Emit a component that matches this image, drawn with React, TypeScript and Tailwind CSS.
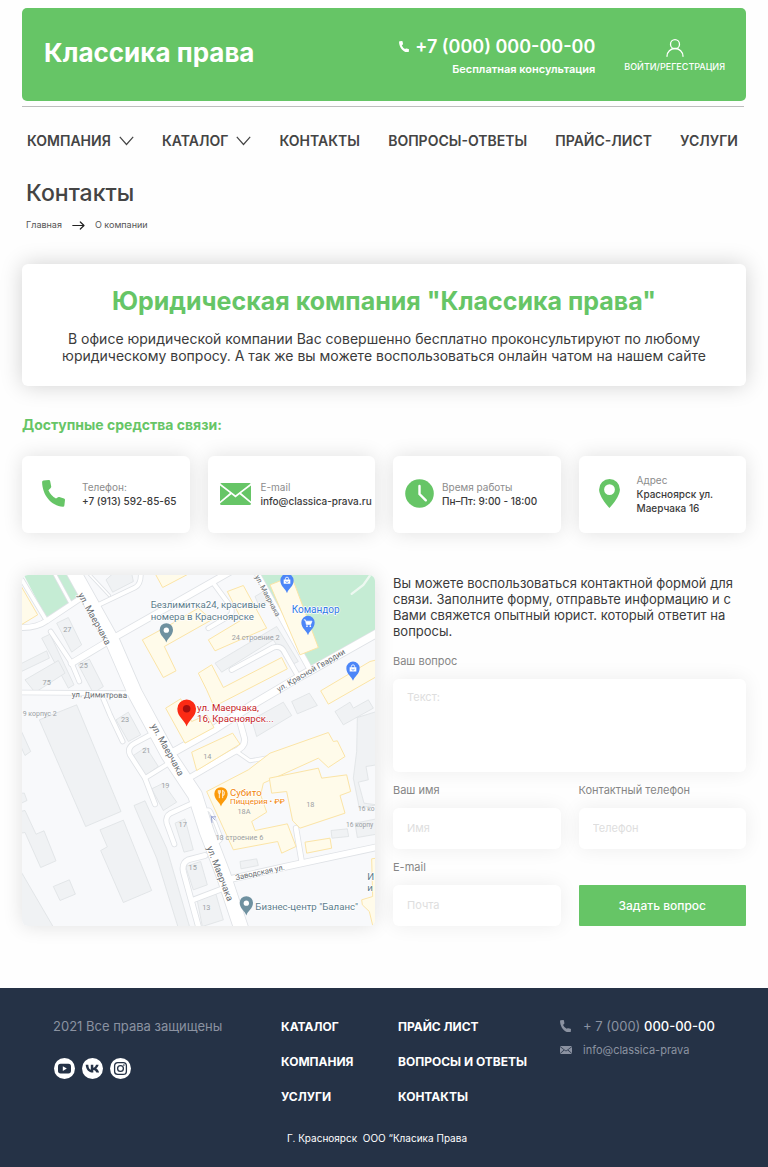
import { useId } from "react";
import type { ReactNode } from "react";

const BODY_FONT = "font-['Inter','Open_Sans',sans-serif]";

function PhoneIcon({ className }: { className: string }) {
  return (
    <svg viewBox="0 0 23 27" className={className} fill="currentColor" aria-hidden="true">
      <path d="M1.500.5 6.500 0a1.600 1.600 0 0 1 1.700 1.200l1 5.300a1.600 1.600 0 0 1-.5 1.500L6.400 10.200a18 18 0 0 0 7.600 8.300l2-1.300a1.600 1.600 0 0 1 1.300-.1l4.700 1.400a1.500 1.500 0 0 1 1 1.500l-.6 5.300a1.500 1.500 0 0 1-1.500 1.500C9 26 .2 14.500.1 2A1.500 1.500 0 0 1 1.500.5Z" />
    </svg>
  );
}

function MailIcon({ className }: { className: string }) {
  return (
    <svg viewBox="0 0 31 22" className={className} fill="currentColor" aria-hidden="true">
      <path d="M1.500 0h28a1.500 1.500 0 0 1 1.200.6L15.500 12.300.3.600A1.500 1.500 0 0 1 1.500 0Z" />
      <path d="M0 2.500 9.900 10 0 18.500ZM31 2.500V18.500L21.100 10Z" />
      <path d="M11.400 11.200 15.500 14.400l4.100-3.200L31 20.500a1.500 1.500 0 0 1-1.500 1.500h-28A1.500 1.500 0 0 1 0 20.500Z" />
    </svg>
  );
}

function ClockIcon() {
  return (
    <svg viewBox="0 0 29 29" className="w-[29px]" aria-hidden="true">
      <circle cx="14.500" cy="14.500" r="14.300" fill="currentColor" />
      <path d="M14.500 7v8l6.300 6.300" fill="none" stroke="#fff" strokeWidth="2.400" strokeLinecap="round" />
    </svg>
  );
}

function PlaceIcon() {
  return (
    <svg viewBox="0 0 21 29" className="w-[21px]" aria-hidden="true">
      <path
        fill="currentColor"
        fillRule="evenodd"
        d="M10.500 0A10.400 10.400 0 0 0 .1 10.400C.1 18 10.500 29 10.500 29S20.900 18 20.900 10.400A10.400 10.400 0 0 0 10.500 0Zm0 16a5.400 5.400 0 1 1 0-10.800 5.400 5.400 0 0 1 0 10.800Z"
      />
    </svg>
  );
}

function ChevronDown() {
  return (
    <svg viewBox="0 0 15 10" className="w-[15px]" fill="none" stroke="currentColor" strokeWidth="1.200" aria-hidden="true">
      <path d="m.8.900 6.700 7.600 6.700-7.600" />
    </svg>
  );
}

const menu = [
  { label: "КОМПАНИЯ", more: true },
  { label: "КАТАЛОГ", more: true },
  { label: "КОНТАКТЫ" },
  { label: "ВОПРОСЫ-ОТВЕТЫ" },
  { label: "ПРАЙС-ЛИСТ" },
  { label: "УСЛУГИ" },
];

/* Map */

const roads: [string, number][] = [
  ["M190 20 310 235 375 385 475 570 555 690 590 800 640 930 695 1095", 42],
  ["M30 188Q80 190 110 168L215 98", 15],
  ["M130 20 180 112", 8],
  ["M36 45 105 160", 11],
  ["M255 125 375 68Q395 58 392 20", 12],
  ["M235 25 298 92", 5],
  ["M185 295 310 220 570 72 665 18", 18],
  ["M122 200 185 295 208 350", 12],
  ["M30 383 360 385", 12],
  ["M275 390 300 450 338 530", 12],
  ["M440 500 375 535Q350 548 360 570L405 640 435 718", 13],
  ["M405 640 485 590", 12],
  ["M548 715 482 745Q465 755 470 775L493 838", 13],
  ["M585 872 535 885Q515 895 520 920L568 1095", 15],
  ["M550 1005 655 965", 14],
  ["M485 565 610 495 740 412 870 335 1110 200", 22],
  ["M545 635 670 562Q712 545 702 515L688 465", 16],
  ["M738 20 895 305", 15],
  ["M665 315 790 248Q815 240 825 265L865 335", 13],
  ["M595 190 655 155Q672 145 662 125L610 55", 12],
  ["M650 945 830 905 1105 846", 18],
  ["M858 790 875 890", 14],
  ["M590 735Q600 732 605 745L632 815Q635 828 622 832", 8],
  ["M680 560 720 588 775 578", 9],
];

const greyBlocks = [
  "140,175 175,158 215,240 185,262",
  "95,220 120,208 192,360 175,370",
  "30,298 110,258 118,280 30,322",
  "45,345 145,287 165,325 75,383",
  "205,300 238,283 280,365 250,385",
  "318,465 355,442 392,510 355,530",
  "88,465 200,420 333,740 227,785",
  "30,490 62,560 45,572 30,540",
  "288,45 310,25 365,25 370,50 308,82",
  "370,572 408,547 445,605 402,635",
  "425,672 460,655 500,712 460,737",
  "495,775 525,762 550,855 522,862",
  "527,905 572,890 592,960 550,975",
  "372,722 405,708 470,850 540,1090 505,1090 440,880",
  "270,795 340,766 425,977 340,1013 272,857 292,846",
  "30,740 45,737 78,808 102,798 138,888 92,908 45,803 30,805",
  "30,685 43,685 51,707 30,717",
  "130,965 178,945 196,988 150,1007",
  "30,915 132,1090 30,1090",
  "562,1008 617,985 640,1065 577,1085",
  "690,890 740,882 745,902 693,912",
  "963,797 1012,792 1016,815 966,820",
  "1035,775 1100,762 1100,808 1042,818",
  "615,295 800,185 865,290 840,302 790,225 635,322",
  "735,95 760,80 775,110 745,118",
  "845,410 898,385 922,422 862,447",
  "725,465 820,412 845,452 740,515",
  "975,440 1020,412 1030,430 1075,405 1090,430 1000,480",
  "1042,458 1100,440 1100,600 1068,605 1075,645 1045,652 1062,715 1100,720 1048,730 1030,640 1040,560",
];

const shopBlocks = [
  "30,58 83,150 30,182",
  "432,20 458,68 540,25",
  "397,225 480,180 565,130 605,165 463,245 498,318 460,338",
  "652,80 700,62 770,190 615,258 595,225 695,165",
  "565,325 605,300 640,368 815,278 832,312 612,425 590,375",
  "467,430 512,402 545,470 590,450 612,488 525,535",
  "545,562 668,505 690,538 560,617",
  "780,60 845,35 925,248 870,270",
  "932,378 1080,290 1100,285 1100,335 955,418",
  "590,680 715,615 780,565 955,503 970,530 982,528 1005,575 955,608 925,580 870,605 760,655 752,690 770,742 725,770 735,797 832,777 858,845 815,865 803,830 670,855",
  "778,640 925,610 935,640 1010,630 1022,680 990,692 1005,745 870,790 848,768 830,680 785,685",
  "885,832 960,820 965,850 890,865",
  "1085,882 1100,880 1100,1090 1090,1090 1078,1040 1057,1020 1055,1005 1088,995",
];

const numbers: [string, number, number][] = [
  ["27", 172, 203],
  ["25", 221, 310],
  ["75", 110, 362],
  ["23", 345, 472],
  ["21", 409, 566],
  ["19", 466, 669],
  ["17", 518, 787],
  ["15", 548, 917],
  ["13", 589, 1035],
  ["14", 592, 583],
  ["18", 901, 726],
  ["18А", 702, 748],
  ["18 строение 6", 688, 825],
  ["24 строение 2", 737, 227],
];

const streets: [string, number, number, number, number][] = [
  ["ул. Маерчака", 203, 90, 61, 28],
  ["ул. Маерчака", 422, 483, 61, 28],
  ["ул. Маерчака", 590, 848, 69, 28],
  ["ул. Маерчака", 734, 36, 62, 22],
  ["ул. Димитрова", 185, 397, 1, 24],
  ["ул. Красной Гвардии", 806, 382, -30, 24],
  ["Заводская ул.", 678, 946, -12, 23],
];

function Pin({ x, y, color, size = 1, children }: { x: number; y: number; color: string; size?: number; children: ReactNode }) {
  return (
    <g transform={`translate(${x} ${y}) scale(${size})`}>
      <path fill={color} d="M0 0C-4-14-20-20-20-38a20 20 0 0 1 40 0C20-20 4-14 0 0Z" />
      {children}
    </g>
  );
}

function Bag() {
  return (
    <g transform="translate(0 -37)">
      <path d="M-10-4H10V9H-10Z" fill="#fff" />
      <path d="M-5-3v-3a5 5 0 0 1 10 0v3" fill="none" stroke="#fff" strokeWidth="2.500" />
      <path d="M-4 1a4 4 0 0 0 8 0" fill="none" stroke="#4c86f8" strokeWidth="2" />
    </g>
  );
}

function CityMap() {
  return (
    <svg
      viewBox="36 30 1059 1054"
      preserveAspectRatio="xMidYMid slice"
      role="img"
      aria-label="Карта проезда"
      className="block h-[351px] w-full rounded-md font-['Roboto',sans-serif] shadow-[0_0_20px_rgba(0,0,0,0.12)]"
    >
      <rect x="30" y="20" width="1080" height="1080" fill="#f8f9fb" />
      <g fill="#c5ecd4">
        <path d="M36 20H205L240 80 108 158Z" />
        <path d="M745 20H1110V195L902 308Z" />
      </g>
      <g fill="#f0f2f4" stroke="#dfe2e5" strokeWidth="2.500">
        {greyBlocks.map((p) => <polygon key={p} points={p} />)}
      </g>
      <g fill="none" stroke="#dfe2e6">
        {roads.map(([d, w]) => <path key={d} d={d} strokeWidth={w + 5} strokeLinecap="round" strokeLinejoin="round" />)}
      </g>
      <g fill="none" stroke="#fff">
        {roads.map(([d, w]) => <path key={d} d={d} strokeWidth={w} strokeLinecap="round" strokeLinejoin="round" />)}
        <path d="M1025 87 1060 60 1085 25" stroke="#eef8f1" strokeWidth="7" strokeLinecap="round" />
      </g>
      <g fill="#fffbea" stroke="#fbe4a6" strokeWidth="3">
        {shopBlocks.map((p) => <polygon key={p} points={p} />)}
      </g>
      <path d="m602 752 14 14m-12-10 2 18m-4-18 16 0" stroke="#98a4d4" strokeWidth="3" fill="none" />
      <g fill="#9b9fa4" fontSize="22" textAnchor="middle">
        {numbers.map(([text, x, y]) => <text key={text} x={x} y={y}>{text}</text>)}
      </g>
      <g fill="#9b9fa4" fontSize="22">
        <text x="38" y="455" fontSize="21">9 корпус 2</text>
        <text x="1044" y="738" fontSize="20">16 ко</text>
        <text x="1008" y="788" fontSize="20">16 корпу</text>
      </g>
      <g fill="#666b70">
        {streets.map(([text, x, y, angle, size]) => (
          <text key={`${x}-${y}`} transform={`translate(${x} ${y}) rotate(${angle})`} fontSize={size} stroke="#fff" strokeWidth="4" paintOrder="stroke">
            {text}
          </text>
        ))}
      </g>
      <g stroke="#fff" strokeWidth="4" strokeLinejoin="round" paintOrder="stroke" fontSize="29">
        <g fill="#5b7c8c">
          <text x="422" y="131">Безлимитка24, красивые</text>
          <text x="422" y="165">номера в Красноярске</text>
          <text x="736" y="1036">Бизнес-центр "Баланс"</text>
          <text x="1072" y="946">И</text>
          <text x="1072" y="980">и</text>
        </g>
        <g fill="#c5221f">
          <text x="561" y="440">ул. Маерчака,</text>
          <text x="561" y="473">16, Красноярск...</text>
        </g>
        <g fill="#f2860c">
          <text x="660" y="693">Субито</text>
          <text x="660" y="719" fontSize="24">Пиццерия • ₽₽</text>
        </g>
        <text x="845" y="144" fontSize="30" fill="#2f78e6">Командор</text>
      </g>
      <Pin x={469} y={233} color="#6f91a0"><circle cy="-37" r="8" fill="#fff" /></Pin>
      <Pin x={709} y={1052} color="#6f91a0"><circle cy="-37" r="8" fill="#fff" /></Pin>
      <Pin x={831} y={85} color="#4c86f8"><Bag /></Pin>
      <Pin x={1029} y={348} color="#4c86f8"><Bag /></Pin>
      <Pin x={894} y={211} color="#4c86f8">
        <path d="M-13-46h5l3 14H8l4-10H-6" fill="#fff" stroke="#fff" strokeWidth="2" />
        <circle cx="-3" cy="-27" r="2.500" fill="#fff" />
        <circle cx="7" cy="-27" r="2.500" fill="#fff" />
      </Pin>
      <Pin x={633} y={725} color="#fb9a0b">
        <path d="M-8-49v7a3 3 0 0 0 6 0v-7M-5-49v24M5-25V-49q8 4 4 15H5" fill="none" stroke="#fff" strokeWidth="2.500" />
      </Pin>
      <Pin x={530} y={485} color="#fb2a14" size={1.4}><circle cy="-38" r="8" fill="#a50e0e" /></Pin>
    </svg>
  );
}

/* Contacts */

function ContactCard({ icon, iconBox, label, children }: { icon: ReactNode; iconBox: string; label: string; children: ReactNode }) {
  return (
    <li className="flex h-[77px] items-center rounded-md bg-white pb-[2px] shadow-[0_0_20px_rgba(0,0,0,0.12)]">
      <span className={`flex shrink-0 text-[#66c566] ${iconBox}`}>{icon}</span>
      <p className="text-[10px] leading-[14px] font-medium whitespace-nowrap text-[#3b3b3b]">
        <span className="block font-normal text-[#8c8c8c]">{label}</span>
        {children}
      </p>
    </li>
  );
}

const fieldStyle =
  "mt-[10px] block w-full rounded-md bg-white px-[14px] text-[11px] text-[#3b3b3b] shadow-[0_0_20px_rgba(0,0,0,0.07)] outline-none placeholder:text-[#dedede]";

function Field({ label, type, placeholder }: { label: string; type: string; placeholder: string }) {
  const id = useId();
  return (
    <div>
      <label htmlFor={id} className="block text-[11px] leading-4 text-[#868686]">{label}</label>
      <input id={id} type={type} placeholder={placeholder} className={`${fieldStyle} h-[41px] pb-[2px]`} />
    </div>
  );
}

function ContactForm() {
  const id = useId();
  return (
    <form onSubmit={(e) => e.preventDefault()}>
      <p className="text-[13px] leading-4 text-[#3b3b3b]">
        Вы можете воспользоваться контактной формой для связи. Заполните форму, отправьте информацию и с Вами свяжется опытный юрист. который ответит на вопросы.
      </p>
      <label htmlFor={id} className="mt-[14px] block text-[11px] leading-4 text-[#868686]">Ваш вопрос</label>
      <textarea id={id} placeholder="Текст:" className={`${fieldStyle} h-[93px] resize-none py-[10px] leading-4`} />
      <div className="mt-[10px] grid grid-cols-2 gap-x-[18px] gap-y-[10px]">
        <Field label="Ваш имя" type="text" placeholder="Имя" />
        <Field label="Контактный телефон" type="tel" placeholder="Телефон" />
        <Field label="E-mail" type="email" placeholder="Почта" />
        <button type="submit" className="h-[41px] self-end rounded-[1px] bg-[#66c566] text-xs font-medium text-white">
          Задать вопрос
        </button>
      </div>
    </form>
  );
}

/* Footer */

function Social({ name, children }: { name: string; children: ReactNode }) {
  return (
    <a href="#" aria-label={name} className="block size-[21px]">
      <svg viewBox="0 0 21 21" className="size-full" aria-hidden="true">
        <circle cx="10.500" cy="10.500" r="10.500" fill="#fff" />
        {children}
      </svg>
    </a>
  );
}

function FooterLinks({ items }: { items: string[] }) {
  return (
    <ul className="flex flex-col gap-[19px] pt-px text-[12px] leading-4 font-bold whitespace-nowrap">
      {items.map((item) => (
        <li key={item}><a href="#">{item}</a></li>
      ))}
    </ul>
  );
}

function Footer() {
  return (
    <footer className="mt-[62px] bg-[#253246] pb-[21px] text-white">
      <div className="grid grid-cols-[228fr_117fr_162fr_186fr] pt-[30px] pr-[22px] pl-[53px]">
        <div>
          <p className="text-[13px] leading-4 text-[#8b92a1]">2021 Все права защищены</p>
          <div className="mt-[24px] flex gap-[7px] pl-px">
            <Social name="YouTube">
              <rect x="4" y="5.800" width="13" height="9.600" rx="2.600" fill="#253246" />
              <path d="M8.800 8.300v4.600l4-2.300Z" fill="#fff" />
            </Social>
            <Social name="ВКонтакте">
              <path
                fill="#253246"
                d="M11 14.600C6.500 14.600 4.100 11.500 3.700 6.800h2.600c.2 3.400 1.400 4.700 2.500 5V6.800h2.500v2.900c1.200-.1 2.200-1.200 2.700-2.900h2.600c-.3 1.700-1.400 3-2.300 3.600.9.500 2.200 1.600 2.800 4.200h-2.700c-.5-1.500-1.500-2.500-3.100-2.700v2.700Z"
              />
            </Social>
            <Social name="Instagram">
              <rect x="4.600" y="4.600" width="11.800" height="11.800" rx="3.200" fill="none" stroke="#253246" strokeWidth="1.300" />
              <circle cx="10.500" cy="10.500" r="2.900" fill="none" stroke="#253246" strokeWidth="1.300" />
              <circle cx="13.900" cy="7.100" r=".8" fill="#253246" />
            </Social>
          </div>
        </div>
        <FooterLinks items={["КАТАЛОГ", "КОМПАНИЯ", "УСЛУГИ"]} />
        <FooterLinks items={["ПРАЙС ЛИСТ", "ВОПРОСЫ И ОТВЕТЫ", "КОНТАКТЫ"]} />
        <address className="flex flex-col gap-[8px] leading-4 whitespace-nowrap text-[#8b92a1] not-italic">
          <a href="tel:+70000000000" className="flex items-center text-[13px]">
            <span className="w-[23px]"><PhoneIcon className="w-[11px]" /></span>
            <span>+ 7 (000) <span className="font-medium text-white">000-00-00</span></span>
          </a>
          <a href="mailto:info@classica-prava.ru" className="flex items-center text-[11px]">
            <span className="w-[23px]"><MailIcon className="w-[12px]" /></span>
            info@classica-prava
          </a>
        </address>
      </div>
      <p className="mt-[25px] pr-[14px] text-center text-[10px] leading-4 whitespace-pre">{"Г. Красноярск  ООО “Класика Права"}</p>
    </footer>
  );
}

export default function App() {
  return (
    <div className={`bg-[#fefefe] pt-2 text-[#3b3b3b] ${BODY_FONT}`}>
      <header className="px-[22px]">
        <div className="flex h-[93px] items-center rounded-[5px] bg-[#66c566] pr-[21px] pl-[22px] text-white">
          <a href="#" className="mr-auto pb-[4px] text-[26px] leading-8 font-bold">Классика права</a>
          <div className="pt-[4px] text-right">
            <a href="tel:+70000000000" className="flex items-center gap-[6px] text-[18px] leading-6 font-semibold">
              <PhoneIcon className="w-[10px]" />
              +7 (000) 000-00-00
            </a>
            <p className="text-[11px] leading-5 font-semibold">Бесплатная консультация</p>
          </div>
          <a href="#" className="ml-[29px] flex flex-col items-center pt-[4px] text-[9px] leading-4 font-medium">
            <svg viewBox="0 0 18 18" className="w-[18px]" fill="none" stroke="currentColor" strokeWidth="1.300" strokeLinecap="round" aria-hidden="true">
              <circle cx="9" cy="5.200" r="4.500" />
              <path d="M1 17.300a8 7.800 0 0 1 16 0" />
            </svg>
            <span className="mt-[2px]">ВОЙТИ/РЕГЕСТРАЦИЯ</span>
          </a>
        </div>
        <hr className="mt-[5px] mr-[2px] border-[#bdbdbd]" />
        <nav className="mt-[24px]">
          <ul className="flex items-center justify-between pr-[8px] pl-[5px] text-[14px] leading-5 font-semibold text-[#444]">
            {menu.map(({ label, more }) => (
              <li key={label}>
                <a href="#" className="flex items-center gap-[8px]">
                  {label}
                  {more && <ChevronDown />}
                </a>
              </li>
            ))}
          </ul>
        </nav>
      </header>

      <main className="px-[22px]">
        <div className="pl-1">
          <h1 className="mt-[26px] text-[23px] leading-8 font-medium text-[#444]">Контакты</h1>
          <nav className="mt-[8px] flex items-center text-[9px] leading-4 text-[#555]">
            <a href="#">Главная</a>
            <svg viewBox="0 0 13 9" className="mx-[10px] w-[13px]" fill="none" stroke="#222" strokeWidth="1.200" strokeLinecap="round" strokeLinejoin="round" aria-hidden="true">
              <path d="M.8 4.500h11M8.300 1l3.700 3.500L8.300 8" />
            </svg>
            <span>О компании</span>
          </nav>
        </div>

        <section className="mt-[31px] rounded-md bg-white px-8 pt-[21px] pb-[22px] text-center shadow-[0_0_22px_rgba(0,0,0,0.18)]">
          <h2 className="text-[25px] leading-8 font-bold text-[#66c566]">Юридическая компания "Классика права"</h2>
          <p className="mt-[13px] text-[14px] leading-[17px]">
            В офисе юридической компании Вас совершенно бесплатно проконсультируют по любому
            юридическому вопросу. А так же вы можете воспользоваться онлайн чатом на нашем сайте
          </p>
        </section>

        <h2 className="mt-[29px] text-[14px] leading-5 font-bold text-[#66c566]">Доступные средства связи:</h2>
        <ul className="mt-[21px] grid grid-cols-4 gap-[18px]">
          <ContactCard icon={<PhoneIcon className="w-[23px]" />} iconBox="w-[60px] pl-[20px]" label="Телефон:">
            +7 (913) 592-85-65
          </ContactCard>
          <ContactCard icon={<MailIcon className="w-[31px]" />} iconBox="w-[53px] pl-[12px]" label="E-mail">
            info@classica-prava.ru
          </ContactCard>
          <ContactCard icon={<ClockIcon />} iconBox="w-[49px] pl-[12px]" label="Время работы">
            Пн–Пт: 9:00 - 18:00
          </ContactCard>
          <ContactCard icon={<PlaceIcon />} iconBox="w-[58px] pl-[20px]" label="Адрес">
            Красноярск ул.<br />Маерчака 16
          </ContactCard>
        </ul>

        <section className="mt-[42px] grid grid-cols-2 gap-[18px]">
          <CityMap />
          <ContactForm />
        </section>
      </main>

      <Footer />
    </div>
  );
}
